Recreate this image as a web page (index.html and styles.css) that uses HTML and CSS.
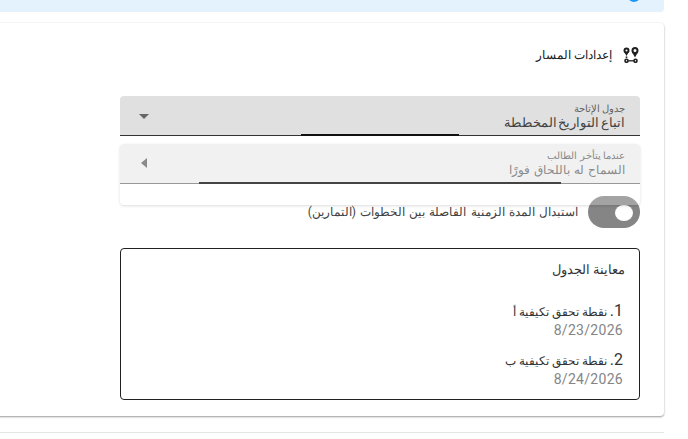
FILE: index.html
```html
<!DOCTYPE html>
<html lang="ar">
<head>
    <meta charset="UTF-8">
    <title>إعدادات المسار</title>
    <link rel="stylesheet" href="styles.css">
</head>
<body>
    <div class="page" dir="rtl">
        <div class="banner">
            <span class="banner-dot"></span>
        </div>
        <div class="card">
            <div class="section-title">
                <svg class="route-icon" viewBox="0 0 18 16" width="18" height="16">
                    <circle cx="4.500" cy="3.500" r="2" fill="none" stroke="#1f1f1f" stroke-width="2"/>
                    <path fill="#1f1f1f" d="M2.500 5.500 4.500 9 6.500 5.500z"/>
                    <circle cx="13" cy="3.500" r="2.500" fill="none" stroke="#1f1f1f" stroke-width="2"/>
                    <path fill="#1f1f1f" d="M10.500 6 13 10.500 15.500 6z"/>
                    <path fill="none" stroke="#1f1f1f" stroke-width="1.600" stroke-dasharray="1.500 1.200" d="M4.500 9.500V12"/>
                    <circle cx="4.500" cy="13.800" r="1.500" fill="none" stroke="#1f1f1f" stroke-width="1.600"/>
                    <circle cx="13.500" cy="13.800" r="1.500" fill="none" stroke="#1f1f1f" stroke-width="1.600"/>
                    <path fill="none" stroke="#1f1f1f" stroke-width="1.300" d="M6 13.800h6"/>
                </svg>
                <span>إعدادات المسار</span>
            </div>
            <div class="form">
                <div class="select-field">
                    <div class="select-text">
                        <div class="select-label">جدول الإتاحة</div>
                        <div class="select-value">اتباع التواريخ المخططة</div>
                    </div>
                    <span class="arrow-down"></span>
                    <span class="ripple ripple-main"></span>
                </div>
                <div class="floating-group">
                    <div class="select-field select-muted">
                        <div class="select-text">
                            <div class="select-label">عندما يتأخر الطالب</div>
                            <div class="select-value">السماح له باللحاق فورًا</div>
                        </div>
                        <span class="arrow-left"></span>
                        <span class="ripple ripple-muted"></span>
                    </div>
                </div>
                <div class="toggle-row">
                    <span class="toggle"><span class="toggle-thumb"></span></span>
                    <span class="toggle-label">استبدال المدة الزمنية الفاصلة بين الخطوات (التمارين)</span>
                </div>
                <div class="preview">
                    <div class="preview-title">معاينة الجدول</div>
                    <div class="preview-item">
                        <div class="item-name"><span class="item-num">1.</span> نقطة تحقق تكيفية أ</div>
                        <div class="item-date">8/23/2026</div>
                    </div>
                    <div class="preview-item">
                        <div class="item-name"><span class="item-num">2.</span> نقطة تحقق تكيفية ب</div>
                        <div class="item-date">8/24/2026</div>
                    </div>
                </div>
            </div>
        </div>
        <div class="next-card"></div>
    </div>
</body>
</html>
```

FILE: styles.css
```css
html, body {
    height: 439px;
    overflow: hidden;
}
body {
    margin: 0;
    background-color: #fff;
    font-family: Roboto, "Liberation Sans", sans-serif;
    color: #212121;
}
.page {
    width: 664px;
}
.banner {
    height: 12px;
    background-color: #e3f2fd;
    border-radius: 0 0 4px 0;
    position: relative;
    overflow: hidden;
}
.banner-dot {
    position: absolute;
    left: 628px;
    top: -10px;
    width: 12px;
    height: 12px;
    border-radius: 50%;
    background-color: #2196f3;
}
.card {
    margin-top: 11px;
    margin-left: -6px;
    height: 393px;
    box-sizing: border-box;
    border-radius: 4px;
    box-shadow: 0 1px 2px rgba(0, 0, 0, 0.4), 0 -1px 1px rgba(0, 0, 0, 0.025);
    padding: 23px 24px 0;
}
.section-title {
    display: flex;
    align-items: center;
    gap: 10px;
    height: 18px;
    font-size: 12px;
    color: #212121;
}
.route-icon {
    flex: none;
}
.form {
    margin-top: 32px;
    width: 520px;
}
.select-field {
    position: relative;
    height: 39px;
    background-color: #e0e0e0;
    border-bottom: 1px solid #333;
    border-radius: 4px 4px 0 0;
    display: flex;
    align-items: flex-end;
    justify-content: space-between;
    padding: 0 15px;
}
.select-text {
    padding-bottom: 4px;
}
.select-label {
    font-size: 10px;
    line-height: 12px;
    color: #616161;
}
.select-value {
    font-size: 13px;
    line-height: 16px;
    word-spacing: -1.500px;
    color: #424242;
}
.arrow-down {
    position: absolute;
    left: 19px;
    top: 18px;
    border-left: 5px solid transparent;
    border-right: 5px solid transparent;
    border-top: 5px solid #666;
}
.arrow-left {
    position: absolute;
    left: 21px;
    top: 14px;
    border-top: 5px solid transparent;
    border-bottom: 5px solid transparent;
    border-right: 6px solid #8a8a8a;
}
.ripple {
    position: absolute;
    height: 2px;
    bottom: -1px;
}
.ripple-main {
    left: 181px;
    width: 158px;
    background-color: #111;
}
.ripple-muted {
    left: 79px;
    width: 362px;
    background-color: #444;
}
.floating-group {
    margin-top: 8px;
    height: 61px;
    position: relative;
    z-index: 1;
    background-color: rgba(255, 255, 255, 0.25);
    box-shadow: 0 1px 3px rgba(0, 0, 0, 0.14);
    border-radius: 4px;
}
.select-muted {
    background-color: #f1f1f1;
    border-bottom-color: #999;
}
.select-muted .select-label,
.select-muted .select-value {
    color: #8a8a8a;
}
.select-muted .select-value {
    font-size: 12px;
    word-spacing: 1px;
}
.select-muted .select-text {
    padding-bottom: 5px;
}
.toggle-row {
    display: flex;
    align-items: center;
    gap: 10px;
    margin-top: -9px;
    height: 32px;
}
.toggle {
    width: 52px;
    height: 32px;
    border-radius: 16px;
    background-color: #858585;
    position: relative;
    flex: none;
}
.toggle-thumb {
    position: absolute;
    left: 27px;
    top: 9px;
    width: 18px;
    height: 16px;
    border-radius: 50%;
    background-color: #fff;
}
.toggle-label {
    font-size: 12px;
    word-spacing: 1.200px;
    color: #424242;
}
.preview {
    margin-top: 20px;
    height: 152px;
    box-sizing: border-box;
    border: 1px solid #212121;
    border-radius: 4px;
    padding: 11px 14px;
}
.preview-title {
    font-size: 13px;
    line-height: 20px;
    color: #333;
    margin-bottom: 22px;
}
.preview-item {
    margin-bottom: 11px;
    padding-right: 2px;
}
.item-name {
    font-size: 12px;
    line-height: 18px;
    color: #333;
}
.item-num {
    font-size: 16px;
}
.item-date {
    direction: ltr;
    text-align: right;
    font-size: 14px;
    line-height: 19px;
    letter-spacing: 0.3px;
    color: #858585;
}
.next-card {
    margin-top: 16px;
    height: 20px;
    border-top: 1px solid #e5e5e5;
}
```
